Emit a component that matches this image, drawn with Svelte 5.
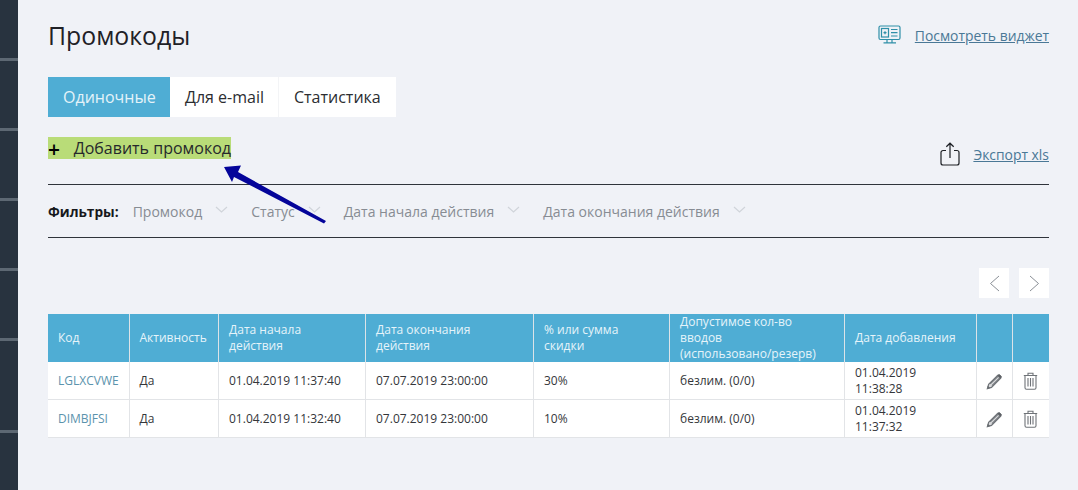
<script>
	const tabs = ['Одиночные', 'Для e-mail', 'Статистика'];
	const filters = ['Промокод', 'Статус', 'Дата начала действия', 'Дата окончания действия'];
	const columns = [
		'Код',
		'Активность',
		'Дата начала действия',
		'Дата окончания действия',
		'% или сумма скидки',
		'Допустимое кол-во вводов\n(использовано/резерв)',
		'Дата добавления',
		'',
		''
	];
	const promos = [
		{ code: 'LGLXCVWE', active: 'Да', start: '01.04.2019 11:37:40', end: '07.07.2019 23:00:00', discount: '30%', uses: 'безлим. (0/0)', added: '01.04.2019 11:38:28' },
		{ code: 'DIMBJFSI', active: 'Да', start: '01.04.2019 11:32:40', end: '07.07.2019 23:00:00', discount: '10%', uses: 'безлим. (0/0)', added: '01.04.2019 11:37:32' }
	];
</script>

<div class="page">
	<aside class="rail">
		<span style="height: 58px"></span>
		<span style="height: 67px"></span>
		<span style="height: 67px"></span>
		<span style="height: 67px"></span>
		<span style="height: 67px"></span>
		<span style="height: 89px"></span>
	</aside>

	<main class="content">
		<header class="top">
			<h1>Промокоды</h1>
			<a class="link widget" href="#widget">
				<svg width="24" height="20" viewBox="0 0 24 20" fill="none" stroke="#2f8fa8" stroke-width="1.2">
					<rect x="1" y="1" width="21" height="13.5" rx="1.5" />
					<rect x="3.5" y="3.5" width="7" height="8.5" />
					<path d="M5.5 7.7h3M7 6.2v3M13 4.5h6.5M13 7.7h6.5M13 11h6.500M9 14.500v3M14 14.500v3M5.500 17.800h12.500" />
				</svg>
				<span>Посмотреть виджет</span>
			</a>
		</header>

		<nav class="tabs">
			{#each tabs as tab, index}
				<button class="tab" class:active={index === 0} type="button">{tab}</button>
			{/each}
		</nav>

		<div class="actions">
			<button class="add" type="button"><span class="plus">+</span>Добавить промокод</button>
			<a class="link export" href="#export">
				<svg width="20" height="24" viewBox="0 0 20 24" fill="none" stroke="#1c1f24" stroke-width="1.2">
					<path d="M6 8.500H3a2 2 0 0 0-2 2V21a2 2 0 0 0 2 2h14a2 2 0 0 0 2-2V10.500a2 2 0 0 0-2-2h-3" />
					<path d="M10 16V1.200M6.300 4.800 10 1.200l3.700 3.600" />
				</svg>
				<span>Экспорт xls</span>
			</a>
		</div>

		<div class="filters">
			<b>Фильтры:</b>
			{#each filters as filter}
				<span class="filter">
					{filter}
					<svg width="13" height="7" viewBox="0 0 13 7" fill="none" stroke="#d0d4da" stroke-width="1.2"><path d="M1 1l5.500 5L12 1" /></svg>
				</span>
			{/each}
		</div>

		<div class="pager">
			<button type="button" aria-label="Назад">
				<svg width="11" height="17" viewBox="0 0 11 17" fill="none" stroke="#8a8f96"><path d="M10 1 1.500 8.500 10 16" /></svg>
			</button>
			<button type="button" aria-label="Вперёд">
				<svg width="11" height="17" viewBox="0 0 11 17" fill="none" stroke="#8a8f96"><path d="M1 1l8.500 7.500L1 16" /></svg>
			</button>
		</div>

		<table>
			<colgroup>
				<col style="width: 81px" />
				<col style="width: 89px" />
				<col style="width: 147px" />
				<col style="width: 168px" />
				<col style="width: 136px" />
				<col style="width: 175px" />
				<col style="width: 132px" />
				<col style="width: 36px" />
				<col style="width: 37px" />
			</colgroup>
			<thead>
				<tr>
					{#each columns as column}
						<th>{column}</th>
					{/each}
				</tr>
			</thead>
			<tbody>
				{#each promos as promo}
					<tr>
						<td><a class="code" href="#code">{promo.code}</a></td>
						<td>{promo.active}</td>
						<td>{promo.start}</td>
						<td>{promo.end}</td>
						<td>{promo.discount}</td>
						<td>{promo.uses}</td>
						<td class="added">{promo.added}</td>
						<td class="icon">
							<svg class="pencil" width="16" height="16" viewBox="0 0 17 17" fill="none" stroke="#6f7378">
								<path d="M1.500 15.500 2.800 11 12.500 1.500l3 3L5.800 14.200z" fill="#d9dadc" stroke-width="1.300" />
								<path d="M4.500 10.500 12.800 2.400M6.300 12.300 14.600 4.200" stroke-width="1.100" />
								<path d="M12.200 1.800l3 3 1-1.100a1 1 0 0 0 0-1.300l-1.700-1.700a1 1 0 0 0-1.300 0z" fill="#5c6065" />
								<path d="M1.500 15.500l.7-2.400 1.700 1.700z" fill="#5c6065" />
							</svg>
						</td>
						<td class="icon">
							<svg class="trash" width="15" height="18" viewBox="0 0 15 18" fill="none" stroke="#6f7378" stroke-width="1.100">
								<path d="M.8 3.500h13.400M5 3.300V1.200h5v2.100" />
								<path d="M2 3.700v12a1.500 1.500 0 0 0 1.500 1.500h8a1.500 1.500 0 0 0 1.500-1.500v-12" />
								<path d="M5 6v8.500M7.500 6v8.500M10 6v8.500" />
							</svg>
						</td>
					</tr>
				{/each}
			</tbody>
		</table>
	</main>

	<svg class="arrow" width="112" height="70" viewBox="0 0 112 70">
		<path d="M4 7 21 5.500 18 12 106 61 104 63.500 14 17 12 22z" fill="#04049a" />
	</svg>
</div>

<style>
	:global(body) {
		background: #f0f2f7;
	}

	.page {
		position: relative;
		display: flex;
		width: 1078px;
		height: 490px;
		overflow: hidden;
		font-family: 'Open Sans', 'Noto Sans', sans-serif;
		color: #26282c;
	}

	.rail {
		flex: none;
		display: flex;
		flex-direction: column;
		width: 18px;
		background: #28333f;
	}

	.rail span {
		border-bottom: 3px solid #5d6873;
	}

	.content {
		flex: none;
		width: 1001px;
		margin-left: 30px;
	}

	.top {
		display: flex;
		justify-content: space-between;
		align-items: center;
		height: 40px;
		margin-top: 15px;
	}

	h1 {
		margin: -1px 0 0;
		font-size: 24.800px;
		font-weight: 400;
		color: #1f2126;
	}

	.link {
		display: flex;
		align-items: center;
		color: #4a7896;
		font-size: 13.900px;
	}

	.widget {
		gap: 13px;
	}

	.tabs {
		display: flex;
		margin-top: 22px;
	}

	.tab {
		width: 108px;
		height: 40px;
		padding: 0 0 0 15px;
		border: none;
		background: #fff;
		font: inherit;
		font-size: 16px;
		color: #2b2d31;
		text-align: left;
	}

	.tab.active {
		width: 122px;
		background: #4fadd4;
		color: #e4f3f9;
	}

	.tab:nth-child(3) {
		width: 118px;
		padding-left: 15px;
		border-left: 1px solid #f3f4f6;
	}

	.actions {
		display: flex;
		justify-content: space-between;
		align-items: flex-start;
		height: 47px;
		margin-top: 20px;
		border-bottom: 1px solid #2f343b;
	}

	.add {
		display: flex;
		align-items: center;
		height: 22px;
		width: 183px;
		padding: 0;
		border: none;
		background: #b9dc78;
		font: inherit;
		font-size: 16px;
		color: #26282c;
		white-space: nowrap;
	}

	.plus {
		width: 26px;
		font-size: 21px;
		line-height: 22px;
		text-align: left;
		color: #000;
		font-weight: 600;
		padding-top: 2px;
	}

	.export {
		gap: 13px;
		margin-top: 5px;
	}

	.filters {
		display: flex;
		align-items: center;
		height: 52px;
		border-bottom: 1px solid #2f343b;
		font-size: 14px;
		color: #878c93;
	}

	.filters b {
		margin-right: 14px;
		font-size: 13.700px;
		color: #17191c;
	}

	.filter {
		display: flex;
		align-items: center;
		gap: 13px;
		margin-right: 23px;
	}

	.filter svg {
		margin-top: -3px;
	}

	.pager {
		display: flex;
		justify-content: flex-end;
		gap: 10px;
		margin-top: 30px;
	}

	.pager button {
		display: flex;
		align-items: center;
		justify-content: center;
		width: 30px;
		height: 30px;
		padding: 0;
		border: none;
		background: #fff;
	}

	table {
		width: 1001px;
		margin-top: 16px;
		border-collapse: collapse;
		table-layout: fixed;
		font-size: 12px;
		line-height: 16px;
		background: #fff;
	}

	th {
		height: 48px;
		padding: 0 10px;
		border-left: 1px solid #dce3e8;
		background: #4fadd4;
		color: #e6f4fa;
		font-weight: 400;
		text-align: left;
		white-space: pre-line;
	}

	th:first-child,
	td:first-child {
		border-left: none;
	}

	th:nth-child(n + 3),
	td:nth-child(n + 3) {
		padding-left: 10.500px;
	}

	td {
		height: 37px;
		padding: 0 10px;
		border-left: 1px solid #e2e4e7;
		border-bottom: 1px solid #e2e4e7;
		color: #34363a;
	}

	.code {
		color: #5b93ad;
		text-decoration: none;
	}

	td.added {
		padding-right: 40px;
	}

	td.icon {
		padding: 0;
	}

	.pencil {
		display: block;
		margin: 3px 0 0 9px;
	}

	.trash {
		display: block;
		margin: 0 0 0 10px;
	}

	.arrow {
		position: absolute;
		left: 220px;
		top: 160px;
	}
</style>
